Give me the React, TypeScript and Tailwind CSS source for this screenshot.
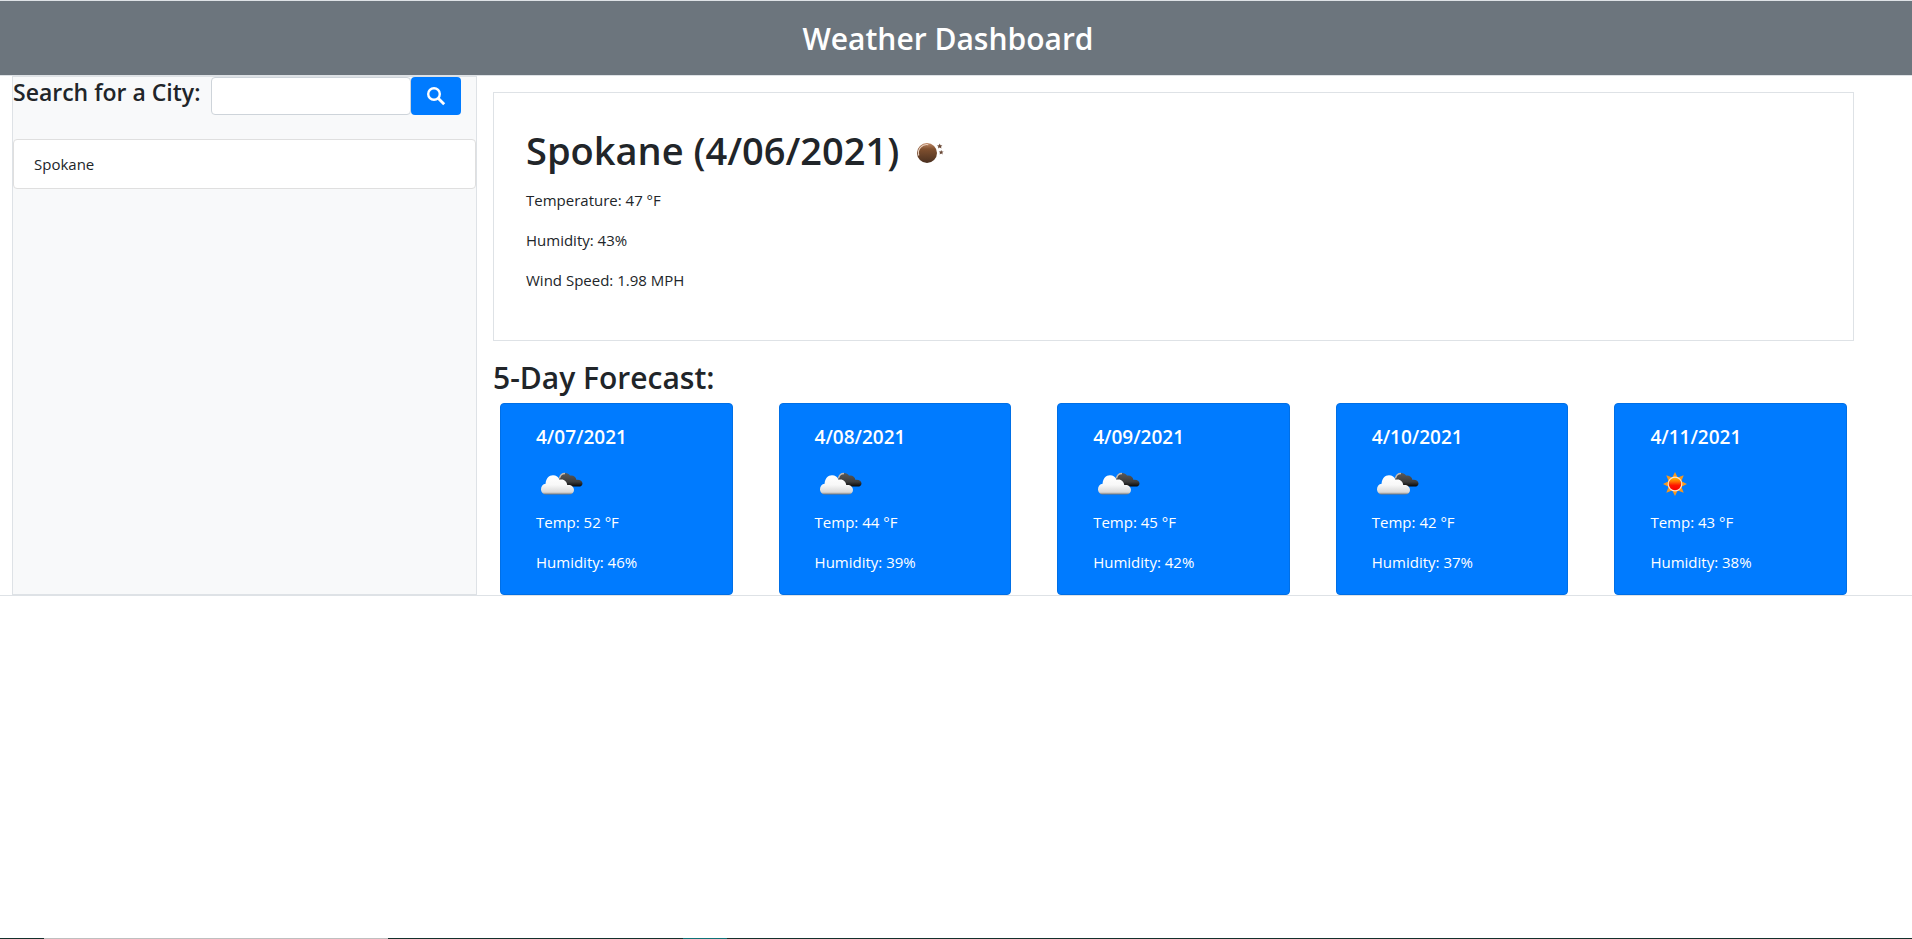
import React from "react";

const forecast = [
  { date: "4/07/2021", icon: "clouds", temp: 52, humidity: 46 },
  { date: "4/08/2021", icon: "clouds", temp: 44, humidity: 39 },
  { date: "4/09/2021", icon: "clouds", temp: 45, humidity: 42 },
  { date: "4/10/2021", icon: "clouds", temp: 42, humidity: 37 },
  { date: "4/11/2021", icon: "sun", temp: 43, humidity: 38 },
];

function NightIcon() {
  return (
    <svg width="50" height="50" viewBox="0 -3 50 50" aria-hidden="true">
      <defs>
        <linearGradient id="moon" x1="0" y1="0" x2="0" y2="1">
          <stop offset="0" stopColor="#c08a68" />
          <stop offset="0.3" stopColor="#80502f" />
          <stop offset="1" stopColor="#4a3020" />
        </linearGradient>
      </defs>
      <circle cx="22" cy="25" r="10" fill="url(#moon)" />
      <path d="M13.8 27.5a8.4 8.4 0 0 1 9.5-10.8" fill="none" stroke="#ecd3c2" strokeWidth="1.1" />
      <path d="M34.7 15.6l.8 1.700 1.900.1-1.400 1.300.5 1.900-1.800-1-1.700 1 .4-1.900-1.400-1.300 1.900-.1z" fill="#6b4a38" />
      <path d="M36.2 22l.7 1.500 1.700.1-1.300 1.200.4 1.700-1.500-.9-1.600.9.4-1.700-1.200-1.200 1.700-.1z" fill="#6b4a38" />
    </svg>
  );
}

function CloudsIcon() {
  return (
    <svg width="50" height="50" viewBox="0 0 50 50" aria-hidden="true">
      <defs>
        <linearGradient id="dark" x1="0" y1="0" x2="0" y2="1">
          <stop offset="0" stopColor="#5a5a5a" />
          <stop offset="0.65" stopColor="#3c3c3c" />
          <stop offset="1" stopColor="#080808" />
        </linearGradient>
        <linearGradient id="light" x1="0" y1="0" x2="0" y2="1">
          <stop offset="0" stopColor="#ffffff" />
          <stop offset="0.5" stopColor="#f8f8f8" />
          <stop offset="0.88" stopColor="#d9d9d9" />
          <stop offset="1" stopColor="#777777" />
        </linearGradient>
      </defs>
      <path
        d="M27 27.500a4 4 0 0 1-4-6c0-4 2.600-7.500 6.200-7.500 2.300 0 3.800 1 4.800 2.600 3-.8 6 1 6.300 4.200 3.200-.6 6.200 1 6.200 3.600 0 1.900-1.600 3.100-3.700 3.100z"
        fill="url(#dark)"
      />
      <path d="M23.500 19.500c.5-3 2.500-5 5.500-5" fill="none" stroke="#c8bcb2" strokeWidth="1.400" />
      <path
        d="M10.500 35.500c-3.300 0-5.500-2.300-5.500-5.300 0-3 1.900-5.200 4.600-5.500.3-5 3.300-8.400 7.400-8.400 3.200 0 5.500 1.700 6.500 4.500 4-1.300 7.600 1.500 7.700 5.300 3.700-.7 6.800 1.500 6.800 4.900 0 2.700-2 4.500-4.800 4.500z"
        fill="url(#light)"
      />
    </svg>
  );
}

function SunIcon() {
  return (
    <svg width="50" height="50" viewBox="0 0 50 50" aria-hidden="true">
      <defs>
        <linearGradient id="sun" x1="0" y1="0" x2="0" y2="1">
          <stop offset="0" stopColor="#ffc400" />
          <stop offset="0.35" stopColor="#ff6a00" />
          <stop offset="0.6" stopColor="#ff1500" />
          <stop offset="1" stopColor="#f40000" />
        </linearGradient>
      </defs>
      <path
        d="M25 13l2.700 5.600 6-2.300-2.300 6 5.600 2.700-5.600 2.700 2.300 6-6-2.300-2.700 5.600-2.700-5.600-6 2.300 2.300-6-5.600-2.700 5.600-2.700-2.300-6 6 2.300z"
        fill="#f7981d"
      />
      <circle cx="25" cy="25" r="6.800" fill="url(#sun)" stroke="#fbe3cf" strokeWidth="1.200" />
    </svg>
  );
}

function SearchIcon() {
  return (
    <svg width="20" height="20" viewBox="0 0 20 20" aria-hidden="true" fill="none" stroke="#ffffff">
      <circle cx="8" cy="8" r="5.800" strokeWidth="2.400" />
      <path d="M12.200 12.200l6 6" strokeWidth="2.800" />
    </svg>
  );
}

export default function App() {
  return (
    <div className="flex min-h-screen flex-col bg-white font-['Open_Sans','Noto_Sans',sans-serif] text-[15px] leading-6 text-[#212529]">
      <header className="flex h-[76px] items-center justify-center border-y border-[#dee2e6] bg-[#6c757d] pr-4 pt-0.5">
        <h1 className="text-[30px] font-semibold leading-10 text-white">Weather Dashboard</h1>
      </header>

      <main className="flex border-b border-[#dee2e6]">
        <aside className="ml-3 w-[465px] shrink-0 border border-[#dee2e6] bg-[#f8f9fa]">
          <form className="flex items-start" onSubmit={(e) => e.preventDefault()}>
            <label htmlFor="city" className="w-[198px] whitespace-nowrap text-[23px] font-semibold leading-[30px]">
              Search for a City:
            </label>
            <input
              id="city"
              type="text"
              className="h-[38px] w-[200px] rounded border border-[#ced4da] bg-white px-3 outline-none"
            />
            <button
              type="submit"
              aria-label="Search"
              className="flex h-[38px] w-[50px] items-center justify-center rounded bg-[#007bff]"
            >
              <SearchIcon />
            </button>
          </form>
          <ul className="mt-6">
            <li className="rounded border border-[#dfdfdf] bg-white px-5 py-3">Spokane</li>
          </ul>
        </aside>

        <div className="ml-4 mr-[58px] min-w-0 flex-1 pt-4">
          <section className="border border-[#dee2e6] px-8 pb-12 pt-8">
            <h2 className="mb-[13px] flex h-[50px] items-center gap-1.5 text-[38px] font-semibold">
              Spokane (4/06/2021)
              <NightIcon />
            </h2>
            <p className="mb-4">Temperature: 47 °F</p>
            <p className="mb-4">Humidity: 43%</p>
            <p>Wind Speed: 1.98 MPH</p>
          </section>

          <h2 className="mb-0.5 mt-3.5 text-[30px] font-semibold leading-[46px]">5-Day Forecast:</h2>
          <div className="mx-[7px] grid grid-cols-5 gap-[46px]">
            {forecast.map((day) => (
              <article
                key={day.date}
                className="h-48 rounded border border-[#006fe6] bg-[#007bff] px-[35px] pt-5 text-white"
              >
                <h3 className="text-[19px] font-semibold leading-[26px]">{day.date}</h3>
                <div className="mb-px mt-[9px] h-[50px]">{day.icon === "sun" ? <SunIcon /> : <CloudsIcon />}</div>
                <p className="mb-4">Temp: {day.temp} °F</p>
                <p>Humidity: {day.humidity}%</p>
              </article>
            ))}
          </div>
        </div>
      </main>

      <footer className="mt-auto flex h-px bg-[#14302c]">
        <div className="ml-11 h-px w-[344px] bg-[#bfbfbf]" />
        <div className="ml-[295px] h-px w-11 bg-[#0f7377]" />
      </footer>
    </div>
  );
}
